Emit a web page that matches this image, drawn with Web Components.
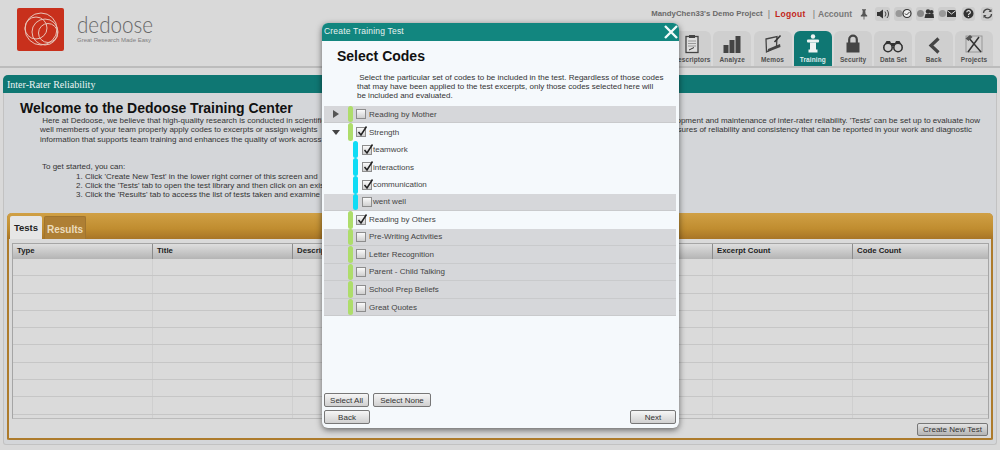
<!DOCTYPE html>
<html>
<head>
<meta charset="utf-8">
<title>Dedoose Training Center</title>
<style>
html,body{margin:0;padding:0;height:450px;overflow:hidden;background:#d9d9d9;font-family:"Liberation Sans",Arial,sans-serif;color:#222}
</style>
</head>
<body>
<dd-app></dd-app>
<script>
// small helper, every element here is just a template + open shadow root
function comp(name, html, Base) {
  const t = document.createElement("template");
  t.innerHTML = html;
  customElements.define(name, class extends (Base || HTMLElement) {
    constructor() {
      super();
      this.attachShadow({ mode: "open" }).appendChild(t.content.cloneNode(true));
      if (this.init) this.init();
    }
    connectedCallback() {
      this.shadowRoot.querySelectorAll("[data-attr]").forEach(el => {
        el.textContent = this.getAttribute(el.dataset.attr) || "";
      });
    }
  });
}

const svg24 = s => `<svg width="24" height="20" viewBox="0 0 24 20">${s}</svg>`;
const ICONS = {
  descriptors: svg24(`<rect x="6" y="2.500" width="12" height="16" fill="#dedede" stroke="#444" stroke-width="1.300"/><rect x="9" y="1" width="6" height="3" fill="#444"/><path d="M8 7h8M8 9.500h8M8 12h8" stroke="#888" stroke-width=".8"/><path d="M9 16l5-2.500" stroke="#333"/>`),
  analyze: svg24(`<rect x="3.500" y="11" width="5" height="8" fill="#444"/><rect x="9.500" y="6" width="5" height="13" fill="#444"/><rect x="15.500" y="2" width="5" height="17" fill="#444"/>`),
  memos: svg24(`<path d="M5 5l11-2.500-.5 10L5.500 18z" fill="none" stroke="#444" stroke-width="1.300"/><path d="M6.500 18l13-5-.5-3-12 5z" fill="#444"/><path d="M13.500 8L19.500 1.500" stroke="#333" stroke-width="1.600"/>`),
  training: svg24(`<g fill="#eef3f2"><circle cx="12" cy="2.500" r="2.200"/><rect x="6" y="5.500" width="12" height="3" rx="1"/><rect x="9" y="8.500" width="6" height="7.500"/><rect x="7.500" y="15.500" width="9" height="3"/></g>`),
  security: svg24(`<path d="M8.200 9V5.500a3.800 3.800 0 0 1 7.600 0V9" fill="none" stroke="#444" stroke-width="2.200"/><rect x="5.500" y="8.500" width="13" height="10" fill="#444"/>`),
  dataset: svg24(`<path d="M2.500 12l3-5h3.500l1 2h4l1-2h3.500l3 5z" fill="#333"/><circle cx="7" cy="13.500" r="4.200" fill="#cfcfcf" stroke="#333" stroke-width="1.600"/><circle cx="17" cy="13.500" r="4.200" fill="#cfcfcf" stroke="#333" stroke-width="1.600"/>`),
  back: svg24(`<path d="M16.500 5.500L9 12.500l7.500 7" fill="none" stroke="#444" stroke-width="3.200" transform="translate(0 -1)"/>`),
  projects: svg24(`<rect x="4" y="2" width="16" height="16" fill="none" stroke="#8a8a8a" stroke-width=".8"/><path d="M6 3l13 15M17 3L6 18" stroke="#333" stroke-width="1.500"/><path d="M3.500 4.500L8 1l2.500 2-4 4z" fill="#555"/>`),
  pin: `<svg width="10" height="14" viewBox="0 0 10 14"><path d="M2.500 1h5v1l-1 1 .5 4 2 2v1H1V9l2-2 .5-4-1-1zM4.500 10h1v4h-1z" fill="#555"/></svg>`,
  speaker: `<svg width="14" height="12" viewBox="0 0 14 12"><path d="M1 4h2.500L7 1.500v9L3.500 8H1z" fill="#333"/><path d="M9 3.500a4 4 0 0 1 0 5M11 2a6 6 0 0 1 0 8" fill="none" stroke="#444"/></svg>`,
  check: `<svg width="17" height="11" viewBox="0 0 17 11"><circle cx="4" cy="5.500" r="3.500" fill="#999"/><circle cx="12" cy="5.500" r="4" fill="#eee" stroke="#333" stroke-width="1.200"/><path d="M10 5.500l1.500 1.500 3-3" fill="none" stroke="#333"/></svg>`,
  people: `<svg width="17" height="11" viewBox="0 0 17 11"><circle cx="3.500" cy="5.500" r="3.500" fill="#888"/><circle cx="11" cy="3.500" r="2.200" fill="#333"/><circle cx="14.500" cy="4" r="2" fill="#333"/><path d="M7.500 10l1-4h8l.5 4z" fill="#333"/></svg>`,
  mail: `<svg width="17" height="11" viewBox="0 0 17 11"><circle cx="3.500" cy="5.500" r="3.500" fill="#999"/><rect x="8" y="2" width="9" height="7" fill="#333"/><path d="M8 2.500l4.500 3.500 4.500-3.500" fill="none" stroke="#ddd"/></svg>`,
  help: `<svg width="11" height="11" viewBox="0 0 11 11"><circle cx="5.500" cy="5.500" r="5" fill="#333"/><path d="M3.800 4.200a1.800 1.600 0 1 1 2.500 1.500c-.6.300-.8.600-.8 1.200" fill="none" stroke="#e4e4e4" stroke-width="1.200"/><rect x="4.900" y="7.800" width="1.200" height="1.200" fill="#e4e4e4"/></svg>`,
  refresh: `<svg width="11" height="11" viewBox="0 0 11 11"><path d="M1.500 5a4 4 0 0 1 7-2.500M9.500 6a4 4 0 0 1-7 2.500" fill="none" stroke="#444" stroke-width="1.300"/><path d="M9.500 1v3h-3zM1.500 10V7h3z" fill="#444"/></svg>`
};

comp("dd-logo", `<style>
:host{display:flex;align-items:flex-start;padding:8px 0 0 17px}
.mark{width:47px;height:43px;background:#c8301c;border-radius:2px;display:block}
.txt{margin-left:13px}
.name{font:300 24px/24px Lato,"Open Sans",sans-serif;margin-top:4px;color:#666;transform:scaleX(.86);transform-origin:left center}
.tag{font-size:6px;line-height:8px;color:#808080}
</style>
<svg class="mark" viewBox="0 0 47 43"><g fill="none" stroke="#e8c4b8" stroke-width="1"><circle cx="24" cy="21" r="16"/><circle cx="19" cy="20" r="11"/><circle cx="31" cy="25" r="9.500"/><circle cx="28" cy="24" r="13"/></g></svg>
<div class="txt"><div class="name">dedoose</div><div class="tag">Great Research Made Easy</div></div>`);

comp("dd-icon-btn", `<style>
:host{display:flex;align-items:center;justify-content:center;width:var(--w,18px);height:14px;background:var(--b,#cdcdcd);border-radius:3px;flex:none}
</style><slot></slot>`);

comp("dd-topbar", `<style>
:host{display:flex;align-items:center;justify-content:flex-end;height:31px;box-sizing:border-box;padding:0 7px 4px 0;font-size:8px;color:#666;white-space:nowrap}
.proj{margin-right:5px;color:#6a6a6a;font-weight:700;font-size:7.800px}
.sep{color:#777;margin:0 2px 0 0;font-size:9px}
.logout{color:#c2271a;font-weight:700;font-size:8.500px;margin:0 7px 0 3px;letter-spacing:.3px}
.acc{font-weight:700;font-size:8.500px;color:#777;margin:0 8px 0 1px}
.icons{display:flex;align-items:center;gap:4px}
dd-icon-btn.plain{--b:transparent;margin-right:3px}
</style>
<span class="proj">MandyChen33's Demo Project</span><span class="sep">|</span><span class="logout">Logout</span><span class="sep">|</span><span class="acc">Account</span>
<div class="icons" id="ic"></div>`, class extends HTMLElement {
  init() {
    const set = [["pin", 8, 1], ["speaker", 15], ["check", 18], ["people", 18], ["mail", 18], ["help", 13], ["refresh", 12]];
    this.shadowRoot.getElementById("ic").innerHTML = set.map(s =>
      `<dd-icon-btn class="${s[2] ? "plain" : ""}" style="--w:${s[1]}px${s[0] === "help" || s[0] === "refresh" ? ";margin-left:2px" : ""}">${ICONS[s[0]]}</dd-icon-btn>`).join("");
  }
});

comp("dd-tab", `<style>
:host{display:flex;flex-direction:column;align-items:center;width:38px;height:35px;box-sizing:border-box;background:#cfcfcf;border-radius:6px 6px 0 0;color:#505050;padding-top:3px;overflow:hidden;flex:none}
:host([active]){background:#0f7773;color:#dfeceb}
.ic{height:20px;margin-bottom:1px;display:flex;justify-content:center}
.lb{font-size:6.500px;font-weight:700;line-height:9px;letter-spacing:.1px;white-space:nowrap}
</style><div class="ic"><slot></slot></div><div class="lb" data-attr="label"></div>`);

comp("dd-nav", `<style>
:host{display:flex;justify-content:flex-end;gap:2.300px;padding-right:7px}
</style><slot></slot>`, class extends HTMLElement {
  init() {
    const tabs = [["Descriptors", "descriptors"], ["Analyze", "analyze"], ["Memos", "memos"], ["Training", "training", 1], ["Security", "security"], ["Data Set", "dataset"], ["Back", "back"], ["Projects", "projects"]];
    this.innerHTML = tabs.map(t => `<dd-tab label="${t[0]}"${t[2] ? " active" : ""}>${ICONS[t[1]]}</dd-tab>`).join("");
  }
});

comp("dd-header", `<style>
:host{display:flex;justify-content:space-between;height:66px;border-bottom:2px solid #bcbcbc;background:#d9d9d9}
.r{display:flex;flex-direction:column}
</style><dd-logo></dd-logo><div class="r"><dd-topbar></dd-topbar><dd-nav></dd-nav></div>`);

comp("dd-welcome", `<style>
:host{display:block;height:120px;box-sizing:border-box;padding:8px 0 0 16px;font-size:8px;color:#333}
h1{font-size:14px;line-height:15px;margin:0;color:#111;font-weight:700}
.l{display:flex;justify-content:space-between;width:940px;margin-left:20px;height:9.400px;line-height:9.400px;white-space:nowrap}
.start{margin:18px 0 0 22px;height:9.400px;line-height:9.400px}
ol{margin:0;padding:0 0 0 56px;list-style:none}
li{line-height:9.400px;height:9.400px;white-space:nowrap}
</style>
<h1>Welcome to the Dedoose Training Center</h1>
<div class="l"><span>&nbsp;Here at Dedoose, we believe that high-quality research is conducted in scientific</span><span>development and maintenance of inter-rater reliability. 'Tests' can be set up to evaluate how</span></div>
<div class="l"><span>well members of your team properly apply codes to excerpts or assign weights</span><span style="margin-right:8px">measures of reliability and consistency that can be reported in your work and diagnostic</span></div>
<div class="l"><span>information that supports team training and enhances the quality of work across</span></div>
<div class="start">To get started, you can:</div>
<ol><li>1. Click 'Create New Test' in the lower right corner of this screen and</li><li>2. Click the 'Tests' tab to open the test library and then click on an existing</li><li>3. Click the 'Results' tab to access the list of tests taken and examine</li></ol>`);

comp("dd-button", `<style>
:host{display:inline-flex;align-items:center;justify-content:center;height:14px;box-sizing:border-box;border:1px solid #777;border-radius:2px;background:linear-gradient(#f6f6f6,#d0d0d0);font-size:8px;color:#333;white-space:nowrap}
:host([dark]){height:13px;background:linear-gradient(#e2e2e2,#b4b4b4)}
</style><slot></slot>`);

comp("dd-grid", `<style>
:host{display:block;margin:0 2px 0 3px;border:1px solid #a5a5a5;border-bottom-color:#bbb;height:176px;box-sizing:border-box;overflow:hidden}
.h,.row{display:grid;grid-template-columns:139px repeat(5,140px) 1fr}
.h{height:15px;background:linear-gradient(#dedede,#b4b4b4);font-size:7.800px;font-weight:700;line-height:14px;color:#222}
.h span{padding-left:4px;border-left:1px solid #8c8c8c}
.h span:first-child{border-left:0}
.row{height:17.300px;box-sizing:border-box;border-bottom:1px solid #c6c6c6;background:#dadada}
.row i{border-left:1px solid #cfcfcf}
.row i:first-child{border-left:0}
</style>
<div class="h"><span>Type</span><span>Title</span><span>Description</span><span></span><span></span><span>Excerpt Count</span><span>Code Count</span></div>
<div id="b"></div>`, class extends HTMLElement {
  init() {
    this.shadowRoot.getElementById("b").innerHTML = Array(10).fill('<div class="row">' + "<i></i>".repeat(7) + "</div>").join("");
  }
});

comp("dd-tests", `<style>
:host{display:block;margin:0 3px;height:227px;box-sizing:border-box;border:2px solid #ad7b2c;border-top:0;border-radius:5px 5px 2px 2px;background:#dadada}
.bar{height:26px;margin:0 -2px;background:linear-gradient(#d0a045,#c08d30 60%,#a87527);border-radius:5px 5px 0 0;display:flex;align-items:flex-end;padding-left:3px;gap:2px}
.t{height:23px;width:32px;display:flex;align-items:center;justify-content:center;font-size:9.500px;font-weight:700;box-sizing:border-box;border-radius:2px 2px 0 0}
.on{background:#e6e6e6;color:#222}
.off{width:42px;font-size:10px;background:#ae7f34;color:#ecdcbc;border:1px solid #a0752f;border-bottom:0;padding-top:2px}
.gap{height:4px}
.foot{display:flex;justify-content:flex-end;padding:4px 3px 0 0}
dd-button{width:71px}
</style>
<div class="bar"><div class="t on">Tests</div><div class="t off">Results</div></div>
<div class="gap"></div><dd-grid></dd-grid>
<div class="foot"><dd-button dark>Create New Test</dd-button></div>`);

comp("dd-panel", `<style>
:host{display:block;margin:7px 3px 0;height:370px;box-sizing:border-box;background:#d4d6d9;border:1px solid #c2c2c2;border-top:0;border-radius:5px 5px 3px 3px}
.t{height:18px;margin:0 -1px;background:#0f7773;border-radius:5px 5px 0 0;color:#eef4f3;font:10px/19px "Liberation Serif",serif;padding-left:4px}
</style><div class="t">Inter-Rater Reliability</div><dd-welcome></dd-welcome><dd-tests></dd-tests>`);

comp("dd-check", `<style>
:host{display:block;width:10px;height:10px;box-sizing:border-box;border:1px solid #8d8d8d;background:linear-gradient(#fafafa,#cfcfcf);position:relative;flex:none}
svg{position:absolute;left:0;top:-3px;display:none}
:host([on]) svg{display:block}
</style><svg width="11" height="12" viewBox="0 0 11 12"><path d="M1.500 7l2.500 3 5.500-8.500" fill="none" stroke="#222" stroke-width="1.500"/></svg>`);

comp("dd-code", `<style>
:host{display:flex;align-items:center;height:17.550px;box-sizing:border-box;font-size:8px;color:#444}
:host([shade]){background:#d6d7da;border-bottom:1px solid #c9cacc}
.arrow{width:24px;display:flex;justify-content:center}
.bar{width:5px;height:100%;border-radius:2.500px;background:#aedd6b;margin-right:3px;flex:none}
:host([child]) .bar{background:#0fdcf5;margin-left:5px;margin-right:4px}
:host([child]) .label{margin-left:1px}
.label{margin-left:3px;white-space:nowrap}
</style><div class="arrow"><slot name="arrow"></slot></div><div class="bar"></div><dd-check id="c"></dd-check><span class="label" data-attr="label"></span>`, class extends HTMLElement {
  init() {
    if (this.hasAttribute("on")) this.shadowRoot.getElementById("c").setAttribute("on", "");
  }
});

comp("dd-modal", `<style>
:host{position:absolute;left:322px;top:23px;width:357px;height:405px;display:flex;flex-direction:column;background:#f5f9fc;border-radius:6px;box-shadow:0 2px 6px rgba(0,0,0,.55);overflow:hidden}
.t{flex:none;height:18px;background:#12867f;color:#e6f2f1;font-size:8.500px;line-height:17px;padding-left:2px;display:flex;justify-content:space-between;letter-spacing:.2px}
.x{margin:2px 0 0;width:17px;height:14px}
h2{margin:7px 0 0 15px;font-size:14px;line-height:17px;color:#111}
p{margin:7.500px 15px 0 35px;font-size:8px;line-height:9.400px;color:#333;height:28px}
.tree{margin:5.300px 3px 0 2px;flex:1}
.row{display:flex;gap:4px;padding:0 3px 0 2px;height:14px}
.row+.row{margin-top:3px;justify-content:space-between;margin-bottom:4px}
.a{width:45px}.n{width:58px}.b{width:46px}
</style>
<div class="t"><span>Create Training Test</span><svg class="x" viewBox="0 0 17 14"><path d="M3 1l12 12M15 1L3 13" stroke="#f2fafa" stroke-width="2.400"/></svg></div>
<h2>Select Codes</h2>
<p>&nbsp;Select the particular set of codes to be included in the test. Regardless of those codes that may have been applied to the test excerpts, only those codes selected here will be included and evaluated.</p>
<div class="tree"><slot></slot></div>
<div class="row"><dd-button class="a">Select All</dd-button><dd-button class="n">Select None</dd-button></div>
<div class="row"><dd-button class="b">Back</dd-button><dd-button class="b">Next</dd-button></div>`);

const right = '<svg slot="arrow" width="6" height="8" viewBox="0 0 6 8"><path d="M0 0l6 4-6 4z" fill="#555"/></svg>';
const down = '<svg slot="arrow" width="8" height="5" viewBox="0 0 8 5"><path d="M0 0h8L4 5z" fill="#444"/></svg>';

comp("dd-app", `<style>
:host{display:block;height:450px;position:relative;overflow:hidden}
</style><dd-header></dd-header><dd-panel></dd-panel><slot></slot>`);

document.querySelector("dd-app").innerHTML = `<dd-modal>
<dd-code shade label="Reading by Mother">${right}</dd-code>
<dd-code on label="Strength">${down}</dd-code>
<dd-code child on label="teamwork"></dd-code>
<dd-code child on label="interactions"></dd-code>
<dd-code child on label="communication"></dd-code>
<dd-code child shade label="went well"></dd-code>
<dd-code on label="Reading by Others"></dd-code>
<dd-code shade label="Pre-Writing Activities"></dd-code>
<dd-code shade label="Letter Recognition"></dd-code>
<dd-code shade label="Parent - Child Talking"></dd-code>
<dd-code shade label="School Prep Beliefs"></dd-code>
<dd-code shade label="Great Quotes"></dd-code>
</dd-modal>`;
</script>
</body>
</html>
